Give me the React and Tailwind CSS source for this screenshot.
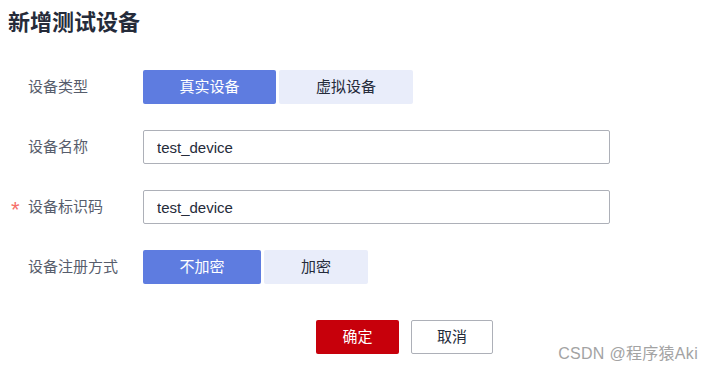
import React, { useState } from 'react';

const font = "font-['Liberation_Sans','Noto_Sans_CJK_SC',sans-serif]";

const Label = ({ children, required }) => (
  <div className="w-[143px] shrink-0 flex items-center pl-[11px] text-[15px] text-[#575d6c]">
    <span className="w-[17px] text-[#f66f6a] text-[22px] leading-none pt-[6px]">{required ? '*' : ''}</span>
    <span>{children}</span>
  </div>
);

const Segmented = ({ options, value, onChange, widths }) => (
  <div className="flex gap-[3px]">
    {options.map((opt, i) => (
      <button
        key={opt}
        onClick={() => onChange(opt)}
        className={
          (value === opt ? 'bg-[#5e7ce0] text-white' : 'bg-[#e9edfa] text-[#252b3a]') +
          ' h-[34px] rounded-[2px] text-[15px] ' + widths[i]
        }
      >
        {opt}
      </button>
    ))}
  </div>
);

const TextInput = ({ value }) => (
  <input
    defaultValue={value}
    className="w-[467px] h-[34px] border border-[#adb0b8] rounded-[2px] px-[13px] text-[15px] text-[#252b3a] outline-none"
  />
);

export default function App() {
  const [type, setType] = useState('真实设备');
  const [mode, setMode] = useState('不加密');

  return (
    <div className={'relative w-[713px] h-[370px] bg-white overflow-hidden ' + font}>
      <h1 className="pl-[8px] pt-[8px] text-[22px] leading-[30px] font-bold text-[#252b3a]">新增测试设备</h1>

      <div className="mt-[32px] flex flex-col gap-[26px]">
        <div className="flex items-center h-[34px]">
          <Label>设备类型</Label>
          <Segmented options={['真实设备', '虚拟设备']} value={type} onChange={setType} widths={['w-[133px]', 'w-[134px]']} />
        </div>
        <div className="flex items-center h-[34px]">
          <Label>设备名称</Label>
          <TextInput value="test_device" />
        </div>
        <div className="flex items-center h-[34px]">
          <Label required>设备标识码</Label>
          <TextInput value="test_device" />
        </div>
        <div className="flex items-center h-[34px]">
          <Label>设备注册方式</Label>
          <Segmented options={['不加密', '加密']} value={mode} onChange={setMode} widths={['w-[118px]', 'w-[104px]']} />
        </div>
      </div>

      <div className="mt-[36px] ml-[316px] flex gap-[12px]">
        <button className="w-[83px] h-[34px] rounded-[2px] bg-[#c7000b] text-white text-[15px]">确定</button>
        <button className="w-[82px] h-[34px] rounded-[2px] border border-[#adb0b8] bg-white text-[#252b3a] text-[15px]">取消</button>
      </div>

      <div className="absolute right-[15px] bottom-[6px] text-[16px] leading-[20px] tracking-[0.3px] text-[#a3a3a3]">CSDN @程序猿Aki</div>
    </div>
  );
}
